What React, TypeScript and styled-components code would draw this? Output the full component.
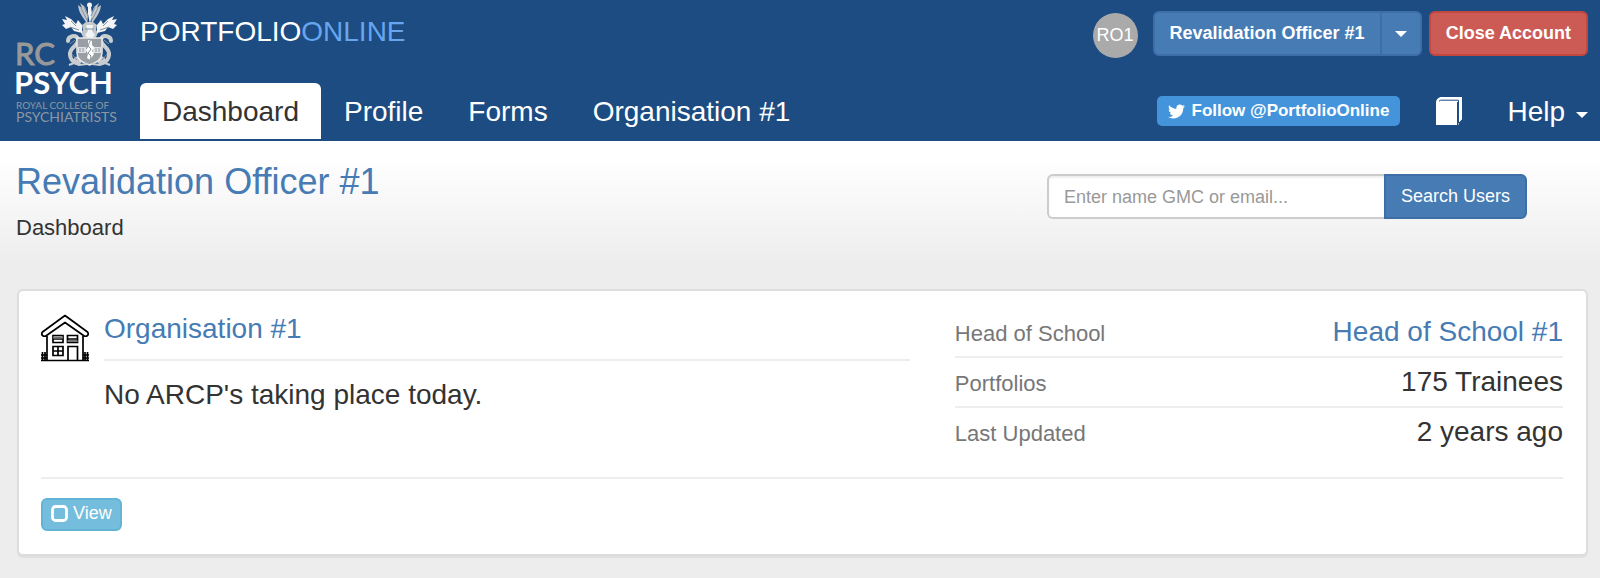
import React from "react";
import styled, { createGlobalStyle } from "styled-components";
import { FaTwitter } from "react-icons/fa";

const GlobalStyle = createGlobalStyle`
  *, *::before, *::after { box-sizing: border-box; }
  body {
    margin: 0;
    background: #ededed;
    color: #333;
    font-family: "Liberation Sans", Arial, sans-serif;
    font-size: 22px;
    line-height: 32px;
  }
  a { color: #467bb4; text-decoration: none; }
  button, input { font-family: inherit; }
  h1, h2, p, dl, dd { margin: 0; font-weight: 400; }
`;

const TopBar = styled.header`
  display: flex;
  padding: 0 12px 2px 14px;
  background: #1c4c82;
`;

const LogoLink = styled.a`
  flex: none;
  width: 126px;
  svg { display: block; }
`;

const BarBody = styled.div`
  flex: 1;
  min-width: 0;
`;

const BrandRow = styled.div`
  display: flex;
  justify-content: space-between;
  align-items: flex-start;
  height: 83px;
`;

const Brand = styled.a`
  color: #fff;
  font-size: 28px;
  line-height: 64px;
  span { color: #67a6ee; }
`;

const Account = styled.div`
  display: flex;
  align-items: flex-start;
  padding-top: 11px;
`;

const Avatar = styled.span`
  width: 45px;
  height: 45px;
  margin: 2px 15px 0 0;
  border-radius: 50%;
  background: #aaa;
  color: #fff;
  font-size: 18px;
  line-height: 44px;
  text-align: center;
`;

const tones = {
  primary: ["#467bb4", "#3d6ea5"],
  danger: ["#cb5b54", "#c2483f"],
  info: ["#75bddc", "#62b3d5"],
};

const Button = styled.button<{ $tone: keyof typeof tones; $join?: "left" | "right"; $strong?: boolean }>`
  padding: 8px 15px;
  border: 2px solid ${(p) => tones[p.$tone][1]};
  border-radius: ${(p) => (p.$join === "left" ? "6px 0 0 6px" : p.$join === "right" ? "0 6px 6px 0" : "6px")};
  background: ${(p) => tones[p.$tone][0]};
  color: #fff;
  font-size: 18px;
  font-weight: ${(p) => (p.$strong ? 700 : 400)};
  line-height: 25px;
  white-space: nowrap;
  cursor: pointer;
`;

const CaretButton = styled(Button)`
  display: flex;
  align-items: center;
  height: 45px;
  margin: 0 7px 0 -2px;
  padding: 0 13px;
`;

const ViewButton = styled(Button)`
  display: flex;
  align-items: center;
  gap: 5px;
  padding: 0 8px 2px;
  line-height: 27px;
`;

const Caret = styled.span`
  display: inline-block;
  border-top: 6px solid #fff;
  border-left: 6px solid transparent;
  border-right: 6px solid transparent;
`;

const NavRow = styled.div`
  display: flex;
  justify-content: space-between;
`;

const Tabs = styled.nav`
  display: flex;
  gap: 1px;
`;

const Tab = styled.a<{ $active?: boolean }>`
  padding: 1px 22px 0;
  border-radius: 6px 6px 0 0;
  background: ${(p) => (p.$active ? "#fff" : "transparent")};
  color: ${(p) => (p.$active ? "#333" : "#fff")};
  font-size: 28px;
  line-height: 55px;
`;

const Tools = styled.div`
  display: flex;
  align-items: center;
`;

const FollowLink = styled.a`
  display: flex;
  align-items: center;
  gap: 7px;
  padding: 0 11px;
  border-radius: 5px;
  background: #4494db;
  color: #fff;
  font-size: 17px;
  font-weight: 700;
  line-height: 30px;
`;

const BookLink = styled.a`
  margin: 0 45px 0 36px;
  svg { display: block; }
`;

const HelpButton = styled.button`
  display: flex;
  align-items: center;
  gap: 11px;
  padding: 1px 0 0;
  border: 0;
  background: none;
  color: #fff;
  font-size: 28px;
  line-height: 55px;
  cursor: pointer;
  ${Caret} { margin-top: 6px; }
`;

const PageHead = styled.section`
  display: flex;
  justify-content: space-between;
  align-items: flex-start;
  padding: 21px 73px 27px 16px;
  background: linear-gradient(#fff 12%, #ededed 94%);
`;

const PageTitle = styled.h1`
  margin-bottom: 10px;
  font-size: 36px;
  line-height: 40px;
`;

const Search = styled.form`
  display: flex;
  width: 480px;
  margin-top: 12px;
`;

const SearchInput = styled.input`
  flex: 1;
  min-width: 0;
  padding: 1px 15px 0;
  border: 2px solid #ccc;
  border-right: 0;
  border-radius: 6px 0 0 6px;
  background: #fff;
  box-shadow: inset 0 2px 2px rgba(0, 0, 0, 0.07);
  color: #555;
  font-size: 18px;
  &::placeholder { color: #999; opacity: 1; }
`;

const Card = styled.article`
  margin: 18px 12px 22px 17px;
  padding: 17px 23px 23px 22px;
  border: 2px solid #ddd;
  border-radius: 6px;
  background: #fff;
  box-shadow: 0 2px 1px rgba(0, 0, 0, 0.06);
`;

const Columns = styled.div`
  display: flex;
  gap: 45px;
  padding-bottom: 21px;
  border-bottom: 2px solid #eee;
  margin-bottom: 19px;
`;

const Summary = styled.div`
  display: flex;
  flex: 10;
  gap: 15px;
  min-width: 0;
  svg { flex: none; margin-top: 6px; }
`;

const SummaryText = styled.div`
  flex: 1;
  font-size: 28px;
  line-height: 40px;
`;

const CardTitle = styled.h2`
  margin-bottom: 14px;
  padding: 1px 0 10px;
  border-bottom: 2px solid #eee;
  font-size: 28px;
`;

const Facts = styled.dl`
  flex: 7;
`;

const Fact = styled.div`
  display: flex;
  justify-content: space-between;
  align-items: baseline;
  & + & { border-top: 2px solid #eee; }
  dt { color: #777; }
  dd { font-size: 28px; line-height: 48px; }
`;

const Logo = () => (
  <svg width="110" height="126" viewBox="-2 0 110 126" role="img" aria-label="Royal College of Psychiatrists">
    {/* crest wings */}
    <g fill="#c3c8cd">
      <path d="M71 25c-1-6-8-9-9-20l4 3-2-5 5 4 3 8zM76 25c1-6 8-9 9-20l-4 3 2-5-5 4-3 8z" />
      <path d="M66 25l4-3h7l4 3-1 5 2 3-3 6H68l-3-6 2-3z" />
    </g>
    {/* mantling */}
    <g fill="#f2f4f5">
      <path d="M66 33l-8-2-3-4-5 2-4-4 3-1-3-5 5 1-2-4 6 3 5 5 2-4 4 5z" />
      <path d="M81 33l8-2 3-4 5 2 4-4-3-1 3-5-5 1 2-4-6 3-5 5-2-4-4 5z" />
      <circle cx="73.500" cy="5" r="2.500" />
      <path d="M72 7h3l1 7-2 10-2-10zM70 25h7l-1 6 3 4-5 5-5-5 3-4z" />
    </g>
    {/* swan supporters */}
    <g fill="none" stroke="#c9cdd0" strokeWidth="4" strokeLinecap="round">
      <path d="M52 41c0-5 8-7 10-2 1 7-9 8-8 16 1 8 10 10 10 5 0-3-5-2-4 0" />
      <path d="M95 41c0-5-8-7-10-2-1 7 9 8 8 16-1 8-10 10-10 5 0-3 5-2 4 0" />
    </g>
    <g fill="none" stroke="#8192a3" strokeWidth="1">
      <path d="M65 8l6 12M68 7l4 9M82 8l-6 12M79 7l-4 9M54 27l9 3M93 27l-9 3M69 29h9M55 21l5 5M92 21l-5 5" />
      <path d="M54 44l5-4M56 54l5 6M93 44l-5-4M91 54l-5 6" />
    </g>
    <path d="M61 38h25v15c0 6-6 10-12.500 12C67 63 61 59 61 53z" fill="#999fa4" stroke="#e9ebec" strokeWidth="1.500" />
    <path d="M62 47h8v6h-8zM77 47h8v6h-8z" fill="#dfe2e4" />
    <path d="M72 40l4 1v4l2 2-2 4 2 3-4 6-3-2 1-4-2-4 2-3z" fill="#fff" />
    <path d="M74 41l-2 5 3 3-3 4 3 3-1 4M64 48v4M67 48v4M80 48v4M83 48v4" fill="none" stroke="#8b949b" />
    <path d="M53 65l5-2 5 2 8-1M94 65l-5-2-5 2-8-1" fill="none" stroke="#c9cdd0" strokeWidth="2" />
    <g fontFamily="Lato, sans-serif">
      <text x="-1" y="65" fontSize="31" fill="#999" stroke="#999" strokeWidth="1">RC</text>
      <text x="-2" y="94" fontSize="31" fontWeight="700" fill="#fff">PSYCH</text>
      <text x="0" y="109" fontSize="10" fill="#8d98a3">ROYAL COLLEGE OF</text>
      <text x="0" y="122" fontSize="14" fill="#8d98a3">PSYCHIATRISTS</text>
    </g>
  </svg>
);

const BookIcon = () => (
  <svg width="26" height="28" viewBox="0 0 26 28" aria-hidden="true">
    <path d="M0 28V5.500C0 2.500 2.500 0 5.500 0H26v22.500l-3 3.500V28H0z" fill="#fff" />
    <path d="M21 28h5v-5.500L22.500 26V28z" fill="#1c4c82" />
    <path d="M3 4.200l1.500-1H22.500V26M21.500 28V5" fill="none" stroke="#1c4c82" strokeWidth="1" />
  </svg>
);

const HouseIcon = () => (
  <svg width="48" height="48" viewBox="0 0 48 48" fill="none" stroke="#000" strokeWidth="1.700" aria-hidden="true">
    <path d="M24 1.500L1.500 18q-1.500 2 0 3.500 2 1.500 4 0L24 8.500l18.500 13q2 1.500 4 0 1.500-1.500 0-3.500z" strokeLinejoin="round" />
    <path d="M6 22v24M42 22v24M0 46.500h48" />
    <path d="M12 21.500h10v7H12zM26.500 21.500h10v7h-10zM12 25h10M26.500 25h10" />
    <path d="M12 23.500h10M26.500 27h10" stroke="#777" strokeWidth="2" />
    <path d="M12 32.500h10v9H12zM17 32.500v9M12 37h10M27 46V32.500h9.500V46" />
    <path d="M1.500 38v8M4 38v8M0 41h6M0 44h6M44 38v8M46.500 38v8M42 41h6M42 44h6" />
  </svg>
);

const SquareIcon = () => (
  <svg width="17" height="17" viewBox="0 0 17 17" aria-hidden="true">
    <rect x="1.500" y="1.500" width="14" height="14" rx="3" fill="none" stroke="#fff" strokeWidth="2.800" />
  </svg>
);

const tabs = ["Dashboard", "Profile", "Forms", "Organisation #1"];

export default function App() {
  return (
    <>
      <GlobalStyle />
      <TopBar>
        <LogoLink href="#home"><Logo /></LogoLink>
        <BarBody>
          <BrandRow>
            <Brand href="#home">PORTFOLIO<span>ONLINE</span></Brand>
            <Account>
              <Avatar>RO1</Avatar>
              <Button type="button" $tone="primary" $join="left" $strong>Revalidation Officer #1</Button>
              <CaretButton type="button" $tone="primary" $join="right" aria-label="Switch role"><Caret /></CaretButton>
              <Button type="button" $tone="danger" $strong>Close Account</Button>
            </Account>
          </BrandRow>
          <NavRow>
            <Tabs>
              {tabs.map((name, i) => (
                <Tab key={name} href="#tab" $active={i === 0}>{name}</Tab>
              ))}
            </Tabs>
            <Tools>
              <FollowLink href="#follow"><FaTwitter size={17} aria-hidden="true" />Follow @PortfolioOnline</FollowLink>
              <BookLink href="#guide" aria-label="Guide"><BookIcon /></BookLink>
              <HelpButton type="button">Help<Caret /></HelpButton>
            </Tools>
          </NavRow>
        </BarBody>
      </TopBar>

      <main>
        <PageHead>
          <div>
            <PageTitle><a href="#user">Revalidation Officer #1</a></PageTitle>
            <p>Dashboard</p>
          </div>
          <Search role="search" onSubmit={(e) => e.preventDefault()}>
            <SearchInput type="text" aria-label="Search users" placeholder="Enter name GMC or email..." />
            <Button type="submit" $tone="primary" $join="right">Search Users</Button>
          </Search>
        </PageHead>

        <Card>
          <Columns>
            <Summary>
              <HouseIcon />
              <SummaryText>
                <CardTitle><a href="#organisation">Organisation #1</a></CardTitle>
                <p>No ARCP's taking place today.</p>
              </SummaryText>
            </Summary>
            <Facts>
              <Fact><dt>Head of School</dt><dd><a href="#head">Head of School #1</a></dd></Fact>
              <Fact><dt>Portfolios</dt><dd>175 Trainees</dd></Fact>
              <Fact><dt>Last Updated</dt><dd>2 years ago</dd></Fact>
            </Facts>
          </Columns>
          <ViewButton type="button" $tone="info"><SquareIcon />View</ViewButton>
        </Card>
      </main>
    </>
  );
}
